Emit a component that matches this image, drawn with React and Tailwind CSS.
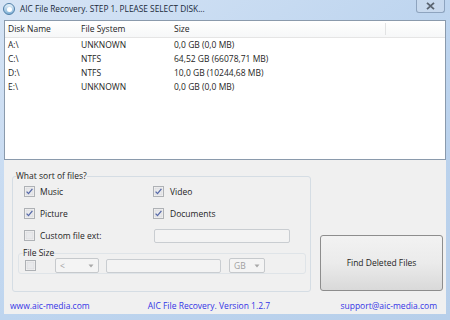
import React from "react";

const disks = [
    { name: "A:\\", fs: "UNKNOWN", size: "0,0 GB (0,0 MB)" },
    { name: "C:\\", fs: "NTFS", size: "64,52 GB (66078,71 MB)" },
    { name: "D:\\", fs: "NTFS", size: "10,0 GB (10244,68 MB)" },
    { name: "E:\\", fs: "UNKNOWN", size: "0,0 GB (0,0 MB)" },
];

function CheckBox({ checked }) {
    return (
        <svg width="11" height="11" viewBox="0 0 11 11" className="shrink-0">
            <rect x="0.5" y="0.5" width="10" height="10" fill="#f4f4f4" stroke="#aeb1b5" />
            <rect x="2" y="2" width="7" height="7" fill="#e8e9eb" stroke="#d6d8da" strokeWidth="0.6" />
            {checked && (
                <path d="M2.6 5.6 L4.5 7.6 L8.4 2.8" fill="none" stroke="#5568a8" strokeWidth="1.3" />
            )}
        </svg>
    );
}

function Dropdown({ value, className }) {
    return (
        <div className={`flex h-[15px] items-center justify-between rounded-[2px] border border-[#c6c9cc] bg-[#f4f4f4] pl-[4px] pr-[4px] text-[#a0a0a0] ${className}`}>
            <span>{value}</span>
            <svg width="6" height="4" viewBox="0 0 6 4">
                <path d="M0.5 0.5 L3 3.5 L5.5 0.5 Z" fill="#a8a8a8" />
            </svg>
        </div>
    );
}

export default function App() {
    return (
        <div
            className="flex h-[320px] w-[450px] flex-col bg-gradient-to-br from-[#d6e4f5] via-[#bed5ef] to-[#b7cfea] text-[8.5px] leading-[12px] text-[#1e1e1e]"
            style={{ fontFamily: '"Open Sans", "Liberation Sans", sans-serif' }}
        >
            {/* title bar */}
            <div className="flex h-[20px] items-start">
                <div className="ml-[3px] mt-[3px] flex h-[12px] w-[12px] items-center justify-center rounded-full border border-[#4f7fa8] bg-gradient-to-b from-[#e8f3fb] to-[#7fb0d6]">
                    <div className="h-[5px] w-[5px] rounded-full bg-white" />
                </div>
                <div className="ml-[5px] mt-[3px] text-[8.3px] text-[#1b2a3a]">
                    AIC File Recovery. STEP 1. PLEASE SELECT DISK...
                </div>
                <div className="ml-auto mr-[5px] flex h-[13px] w-[29px] items-center justify-center rounded-b-[3px] border border-t-0 border-[#8ea4bf] bg-[#cfdcec]/60">
                    <svg width="9" height="8" viewBox="0 0 9 8">
                        <path d="M1 0.8 L8 7.2 M8 0.8 L1 7.2" stroke="#5a6470" strokeWidth="1.8" />
                    </svg>
                </div>
            </div>

            {/* client area */}
            <div className="mx-[4px] flex h-[294px] flex-col bg-[#f0f0f0]">
                {/* list view */}
                <div className="h-[140px] border border-[#8a9aac] bg-white">
                    <div className="flex h-[17px] items-center border-b border-[#e5e5e5] bg-gradient-to-b from-white to-[#f6f7f8]">
                        <span className="w-[76px] pl-[3px]">Disk Name</span>
                        <span className="w-[93px]">File System</span>
                        <span className="w-[211px]">Size</span>
                        <span className="h-[12px] w-px bg-[#e2e3e4]" />
                    </div>
                    <div>
                        {disks.map((d) => (
                            <div key={d.name} className="flex h-[14px] items-center">
                                <span className="w-[76px] pl-[3px]">{d.name}</span>
                                <span className="w-[93px]">{d.fs}</span>
                                <span>{d.size}</span>
                            </div>
                        ))}
                    </div>
                </div>

                {/* options */}
                <div className="flex flex-1 flex-col">
                    <div className="ml-[8px] mt-[10px] flex items-end">
                        <fieldset className="h-[122px] w-[299px] rounded-[3px] border border-[#d5dde4] px-[3px]">
                            <legend className="px-0">What sort of files?</legend>
                            <div className="mt-[4px] flex flex-col gap-[11px] pl-[8px]">
                                <div className="flex h-[11px] items-center">
                                    <div className="flex w-[129px] items-center gap-[5px]">
                                        <CheckBox checked />
                                        <span>Music</span>
                                    </div>
                                    <div className="flex items-center gap-[6px]">
                                        <CheckBox checked />
                                        <span>Video</span>
                                    </div>
                                </div>
                                <div className="flex h-[11px] items-center">
                                    <div className="flex w-[129px] items-center gap-[5px]">
                                        <CheckBox checked />
                                        <span>Picture</span>
                                    </div>
                                    <div className="flex items-center gap-[6px]">
                                        <CheckBox checked />
                                        <span>Documents</span>
                                    </div>
                                </div>
                                <div className="flex h-[11px] items-center">
                                    <div className="flex w-[130px] items-center gap-[5px]">
                                        <CheckBox />
                                        <span>Custom file ext:</span>
                                    </div>
                                    <div className="h-[14px] w-[136px] rounded-[2px] border border-[#c9cdd1] bg-[#f3f3f3]" />
                                </div>
                            </div>
                            <fieldset className="ml-[2px] mt-[6px] h-[27px] w-[288px] rounded-[3px] border border-[#dfe4e8] px-[4px]">
                                <legend className="px-0">File Size</legend>
                                <div className="-mt-[1px] flex items-center">
                                    <div className="ml-[2px]">
                                        <CheckBox />
                                    </div>
                                    <Dropdown value="<" className="ml-[19px] w-[44px]" />
                                    <div className="ml-[7px] h-[14px] w-[115px] rounded-[2px] border border-[#c9cdd1] bg-[#f3f3f3]" />
                                    <Dropdown value="GB" className="ml-[8px] w-[36px]" />
                                </div>
                            </fieldset>
                        </fieldset>
                        <button className="mb-[1px] ml-[9px] flex h-[56px] w-[123px] items-center justify-center rounded-[3px] border border-[#8d8d8d] bg-gradient-to-b from-[#f2f2f2] via-[#ebebeb] to-[#d9d9d9] text-[8.5px] text-[#1e1e1e]">
                            Find Deleted Files
                        </button>
                    </div>
                    <div className="mt-auto mb-[2px] flex h-[12px] items-center px-[6px] text-[#3434e6]">
                        <span>www.aic-media.com</span>
                        <span className="ml-[58px]">AIC File Recovery. Version 1.2.7</span>
                        <span className="ml-auto mr-[3px]">support@aic-media.com</span>
                    </div>
                </div>
            </div>
        </div>
    );
}
